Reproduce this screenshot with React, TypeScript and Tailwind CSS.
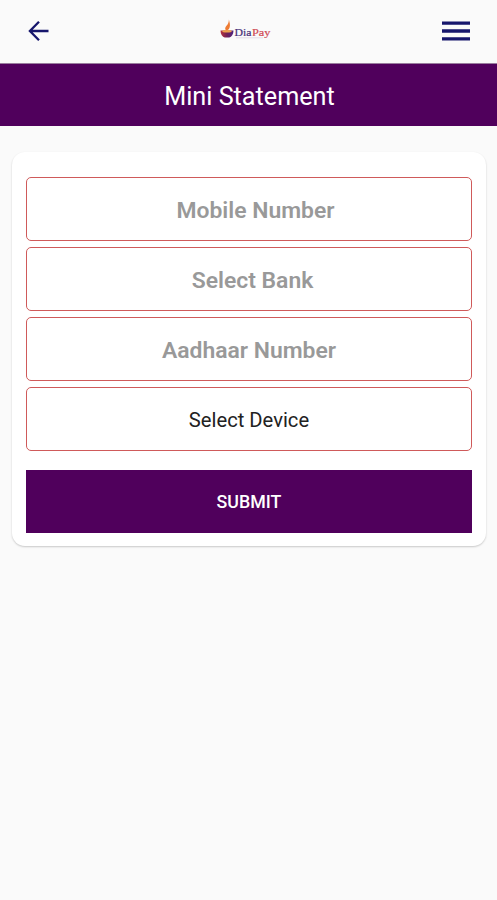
const FIELDS = [
  { label: "Mobile Number", offset: "pl-[13px]" },
  { label: "Select Bank", offset: "pl-[7px]" },
  { label: "Aadhaar Number", offset: "" },
];

function Logo() {
  return (
    <svg width="52" height="22" viewBox="0 0 52 22" role="img" aria-label="DiaPay">
      <defs>
        <linearGradient id="bowl" x1="0" y1="0" x2="1" y2="0">
          <stop offset="0" stopColor="#b8323c" />
          <stop offset="0.5" stopColor="#702055" />
          <stop offset="1" stopColor="#4b2284" />
        </linearGradient>
      </defs>
      <path d="M0.500 11.500h13c0 4-2 6.400-4.200 7.100H4.700C2.500 17.900 0.500 15.500 0.500 11.500Z" fill="url(#bowl)" />
      <ellipse cx="7" cy="12.300" rx="4.800" ry="1.300" fill="#efa04c" />
      <path d="M8.900 0.500C9.500 3.500 10.500 5.500 9.700 8.200C9.200 10.300 7.700 11.500 6.200 11.200C4.600 10.500 5 8.300 6.500 6.700C8.100 5 8.900 3.200 8.900 0.500Z" fill="#ee7b32" />
      <path d="M16 18.800h27" stroke="#ded5e4" strokeWidth="0.800" />
      <text x="14.500" y="17" fontSize="11" textLength="17" lengthAdjust="spacingAndGlyphs" fill="#483179" stroke="#483179" strokeWidth="0.200" className="font-['Liberation_Serif',serif]">Dia</text>
      <text x="32" y="17" fontSize="11" textLength="18.500" lengthAdjust="spacingAndGlyphs" fill="#d04a55" stroke="#d04a55" strokeWidth="0.200" className="font-['Liberation_Serif',serif]">Pay</text>
    </svg>
  );
}

export default function App() {
  return (
    <div className="min-h-[900px] w-full bg-[#fafafa] font-[Roboto,sans-serif]">
      <header className="flex h-[63px] items-center justify-between pl-[28px] pr-[27px]">
        <button aria-label="Back" className="-mt-px flex w-[28px]">
          <svg width="21" height="22" viewBox="0 0 21 22" fill="none" stroke="#16166c" strokeWidth="2.300">
            <path d="M20.500 11H2M11 1.700L1.900 11L11 20.300" />
          </svg>
        </button>
        <div className="-mt-[3px] mr-[6px]"><Logo /></div>
        <button aria-label="Menu" className="-mt-px flex w-[28px]">
          <svg width="28" height="20" viewBox="0 0 28 20" stroke="#16166c" strokeWidth="3.300">
            <path d="M0 2.150H28M0 10H28M0 17.850H28" />
          </svg>
        </button>
      </header>
      <h1 className="flex h-[63px] items-center justify-center border-t border-[#9a7d9e] bg-[#50005c] pl-[2px] pt-[3px] text-[25.200px] text-white">
        Mini Statement
      </h1>
      <main className="ml-3 mr-[11px] mt-[26px] h-[394px] rounded-[13px] bg-white px-[14px] pt-[25px] shadow-[0_1px_2px_rgba(0,0,0,0.2)]">
        <div className="flex flex-col gap-[6px]">
          {FIELDS.map(({ label, offset }) => (
            <div key={label} className={`flex h-16 items-center justify-center rounded-[5px] border border-[#cf5a5a] pt-[5px] text-[22.900px] font-semibold text-[#999] ${offset}`}>
              {label}
            </div>
          ))}
          <div className="flex h-16 items-center justify-center rounded-[5px] border border-[#cf5a5a] pt-[3px] text-[20.200px] text-[#222]">
            Select Device
          </div>
        </div>
        <button className="mt-[19px] flex h-[63px] w-full items-center justify-center bg-[#50005c] pt-px text-[17.800px] font-medium text-white">
          SUBMIT
        </button>
      </main>
    </div>
  );
}
